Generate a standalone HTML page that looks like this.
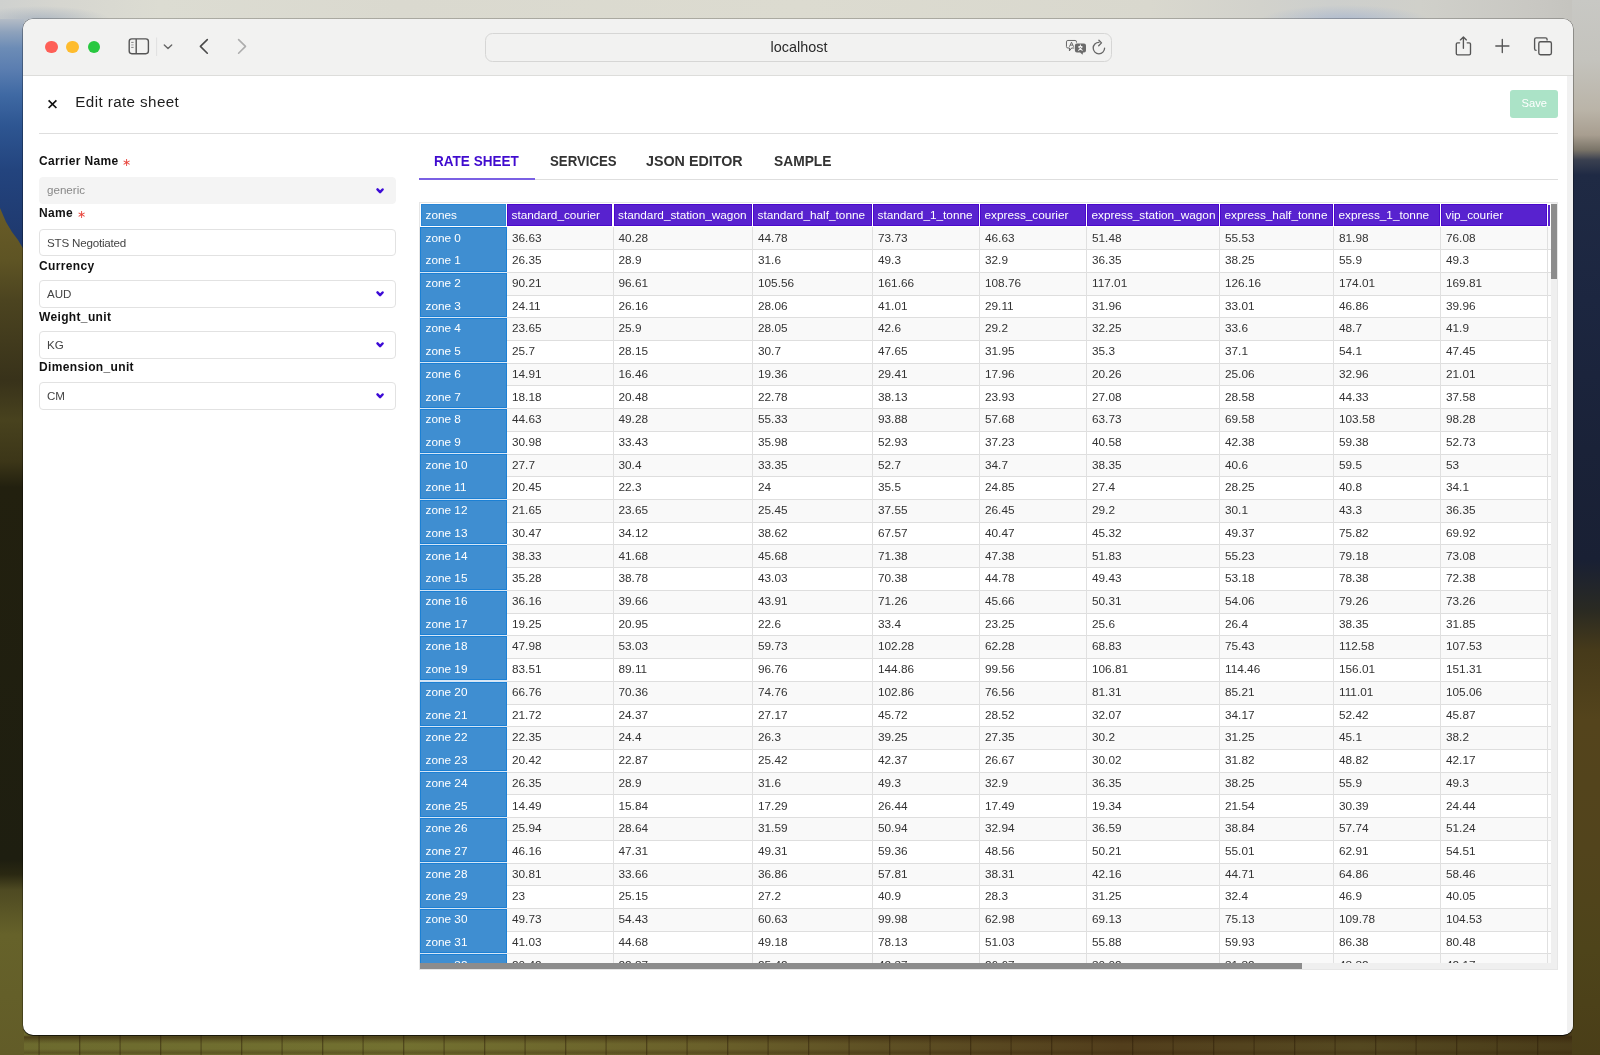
<!DOCTYPE html>
<html><head><meta charset="utf-8"><title>Edit rate sheet</title>
<style>
html,body{margin:0;padding:0}
body{width:1600px;height:1055px;overflow:hidden;position:relative;font-family:"Liberation Sans", sans-serif;background:#6a6a30}
.t{position:absolute;white-space:nowrap}
.bg{position:absolute}
</style></head><body>
<div id="root" style="position:absolute;left:0;top:0;width:1600px;height:1055px;will-change:transform">
<div class="bg" style="left:0;top:0;width:1600px;height:32px;background:radial-gradient(ellipse 85px 16px at 1345px 21px,rgba(168,182,206,0.85),rgba(168,182,206,0) 100%),radial-gradient(ellipse 70px 14px at 40px 20px,rgba(150,165,185,0.6),rgba(150,165,185,0) 100%),linear-gradient(90deg,#cfd1cf 0px,#d6d6d0 60px,#dcdcd2 160px,#dad9cf 400px,#dcdbd0 800px,#d9d8ce 1150px,#d2d2cc 1260px,#cdcfcd 1330px,#d0d0ca 1420px,#c8c7c2 1540px,#c2c1bc 1600px)"></div>
<div class="bg" style="left:0;top:1022px;width:1600px;height:33px;background:repeating-linear-gradient(90deg,rgba(40,25,5,0) 0px,rgba(40,25,5,0) 38px,rgba(40,25,5,0.45) 39px,rgba(40,25,5,0) 40.5px),linear-gradient(180deg,rgba(40,25,5,0) 0px,rgba(40,25,5,0) 13px,rgba(50,30,8,0.55) 15px,rgba(50,30,8,0.2) 19px,rgba(40,25,5,0) 22px,rgba(40,25,5,0) 27px,rgba(50,30,8,0.3) 31px,rgba(40,25,5,0) 33px),linear-gradient(90deg,#6c6a2e 0%,#727030 25%,#6a602a 44%,#5e5024 55%,#523e1c 70%,#544820 85%,#483a18 100%)"></div>
<div class="bg" style="left:0;top:19px;width:23.5px;height:1036px;background:linear-gradient(180deg,#b4bcc6 0px,#8ea2bc 13px,#6c8cb6 29px,#5a7db0 51px,#3f69a3 76px,#2e5692 106px,#23447e 151px,#1f3a70 211px,#1e3668 241px)"></div>
<svg class="bg" style="left:0;top:195px" width="24" height="860" viewBox="0 195 24 860">
<defs><linearGradient id="tree" x1="0" y1="195" x2="0" y2="1055" gradientUnits="userSpaceOnUse">
<stop offset="0" stop-color="#6c5e28"/><stop offset="0.076" stop-color="#5e5424"/><stop offset="0.122" stop-color="#4c4420"/><stop offset="0.215" stop-color="#38321a"/><stop offset="0.262" stop-color="#48421e"/><stop offset="0.31" stop-color="#3c3618"/><stop offset="0.34" stop-color="#22200f"/><stop offset="0.773" stop-color="#1e1e10"/><stop offset="0.79" stop-color="#2a2812"/><stop offset="0.808" stop-color="#4e4a22"/><stop offset="0.86" stop-color="#66622a"/><stop offset="1" stop-color="#625c28"/></linearGradient></defs>
<path d="M0 208 L6 222 L12 232 L18 240 L24 250 L24 1055 L0 1055 Z" fill="url(#tree)"/>
</svg>
<div class="bg" style="left:1572px;top:0;width:28px;height:1055px;background:linear-gradient(180deg,#c8c8c4 0px,#c4c3bd 60px,#bab4a8 110px,#a89e90 135px,#7a7468 150px,#3a4050 160px,#1f2a44 175px,#1c2640 300px,#1a2238 450px,#192034 560px,#2a2a22 610px,#463a1a 650px,#54441c 720px,#52441c 850px,#4e441a 950px,#4a3e18 1055px)"></div>
<div style="position:absolute;left:23px;top:18.5px;width:1550px;height:1016.5px;border-radius:10px;background:#fff;overflow:hidden;box-shadow:0 0 0 0.5px rgba(0,0,0,0.45),0 1px 1px rgba(0,0,0,0.75)"><div style="position:absolute;left:0;top:0;width:1550px;height:56.5px;background:#f2f2f1;border-bottom:1px solid #dddddb"></div><div style="position:absolute;left:1544px;top:57.5px;width:6px;height:960px;background:#f1f1f1"></div></div><div style="position:absolute;left:45.0px;top:40.6px;width:12.6px;height:12.6px;border-radius:50%;background:#fe5f57"></div><div style="position:absolute;left:66.2px;top:40.6px;width:12.6px;height:12.6px;border-radius:50%;background:#febc2e"></div><div style="position:absolute;left:87.7px;top:40.6px;width:12.6px;height:12.6px;border-radius:50%;background:#28c840"></div><svg style="position:absolute;left:120px;top:30px" width="140" height="35" viewBox="120 30 140 35">
<rect x="129.2" y="38.9" width="19.2" height="14.8" rx="2.6" fill="none" stroke="#555" stroke-width="1.4"/>
<line x1="136.2" y1="38.9" x2="136.2" y2="53.7" stroke="#555" stroke-width="1.4"/>
<line x1="131.2" y1="42.4" x2="133.6" y2="42.4" stroke="#777" stroke-width="0.9"/>
<line x1="131.2" y1="44.9" x2="133.6" y2="44.9" stroke="#999" stroke-width="0.9"/>
<line x1="131.2" y1="47.4" x2="133.6" y2="47.4" stroke="#777" stroke-width="0.9"/>
<line x1="156.6" y1="37.5" x2="156.6" y2="56" stroke="#e0e0e0" stroke-width="1"/>
<path d="M164.3 45 L168 48.5 L171.7 45" fill="none" stroke="#666" stroke-width="1.4" stroke-linecap="round" stroke-linejoin="round"/>
<path d="M207.3 39.6 L200.4 46.4 L207.3 53.2" fill="none" stroke="#4a4a4a" stroke-width="1.6" stroke-linecap="round" stroke-linejoin="round"/>
<path d="M238.6 39.6 L245.5 46.4 L238.6 53.2" fill="none" stroke="#adadad" stroke-width="1.6" stroke-linecap="round" stroke-linejoin="round"/>
</svg><div style="position:absolute;left:484.8px;top:32.5px;width:627px;height:29px;box-sizing:border-box;border:1px solid #d6d6d5;border-radius:7.5px;background:#f2f2f1"></div><div class="t" style="left:770.60px;top:40.11px;font-size:14.4px;line-height:14.4px;color:#2a2a2a;font-weight:400;">localhost</div>
<svg style="position:absolute;left:1060px;top:35px" width="55" height="25" viewBox="1060 35 55 25">
<path d="M1067.9 40.46 H1075.1 A1.4 1.4 0 0 1 1076.5 41.86 V46.6 A1.4 1.4 0 0 1 1075.1 48 H1071.6 L1069.4 50.9 L1069.5 48 H1067.9 A1.4 1.4 0 0 1 1066.46 46.6 V41.86 A1.4 1.4 0 0 1 1067.9 40.46 Z" fill="none" stroke="#666" stroke-width="1"/>
<path d="M1069.4 46.7 L1071.5 42.2 L1073.6 46.7 M1070.2 45.1 H1072.8" fill="none" stroke="#666" stroke-width="0.95"/>
<path d="M1076.6 42.6 H1084.3 A2.4 2.4 0 0 1 1086.7 45 V51 A2.4 2.4 0 0 1 1084.3 53.4 H1083.8 L1083.4 55.6 L1079.9 53.4 H1076.6 A2.4 2.4 0 0 1 1074.2 51 V45 A2.4 2.4 0 0 1 1076.6 42.6 Z" fill="#f2f2f1"/>
<path d="M1076.9 43.5 H1084 A2 2 0 0 1 1086 45.5 V50.5 A2 2 0 0 1 1084 52.5 H1083 L1082.6 54.75 L1080.1 52.5 H1076.9 A2 2 0 0 1 1074.9 50.5 V45.5 A2 2 0 0 1 1076.9 43.5 Z" fill="#6b6b6b"/>
<path d="M1078.3 46.6 L1082.5 50.6 M1082.5 46.6 L1078.3 50.6 M1078.4 46.5 H1082.4 M1080.4 44.6 V46.2" fill="none" stroke="#f4f4f4" stroke-width="1.05"/>
<path d="M1104.6 48.1 A5.7 5.7 0 1 1 1098.9 42.4" fill="none" stroke="#666" stroke-width="1.3" stroke-linecap="round"/>
<path d="M1098.9 40.2 L1101.5 42.9 L1098.7 45.8" fill="none" stroke="#666" stroke-width="1.3" stroke-linecap="round" stroke-linejoin="round"/>
</svg><svg style="position:absolute;left:1440px;top:30px" width="130" height="35" viewBox="1440 30 130 35">
<path d="M1459.6 42.8 h-2 a1.3 1.3 0 0 0 -1.3 1.3 v9.4 a1.3 1.3 0 0 0 1.3 1.3 h11.6 a1.3 1.3 0 0 0 1.3 -1.3 v-9.4 a1.3 1.3 0 0 0 -1.3 -1.3 h-2" fill="none" stroke="#555" stroke-width="1.35" stroke-linecap="round"/>
<path d="M1463.4 48.2 V37 M1460.4 39.9 L1463.4 36.9 L1466.4 39.9" fill="none" stroke="#555" stroke-width="1.35" stroke-linecap="round" stroke-linejoin="round"/>
<path d="M1495.8 46 H1508.9 M1502.3 39.4 V52.6" fill="none" stroke="#555" stroke-width="1.35" stroke-linecap="round"/>
<path d="M1536.6 50.3 h-0.4 a1.6 1.6 0 0 1 -1.6 -1.6 v-9.2 a1.6 1.6 0 0 1 1.6 -1.6 h9.3 a1.6 1.6 0 0 1 1.6 1.6 v0.9" fill="none" stroke="#555" stroke-width="1.35"/>
<rect x="1538.8" y="41.7" width="12.6" height="13" rx="1.7" fill="none" stroke="#555" stroke-width="1.35"/>
</svg><svg style="position:absolute;left:45px;top:97px" width="15" height="15" viewBox="45 97 15 15">
<path d="M48.6 100.4 L56.4 108 M56.4 100.4 L48.6 108" stroke="#111" stroke-width="1.7" stroke-linecap="butt"/></svg><div class="t" style="left:75.30px;top:94.23px;font-size:15.2px;line-height:15.2px;color:#1e1e1e;font-weight:400;letter-spacing:0.4px">Edit rate sheet</div>
<div style="position:absolute;left:1510px;top:90px;width:48px;height:28px;border-radius:3px;background:#abe3c7"></div><div class="t" style="left:1521.50px;top:98.42px;font-size:11.2px;line-height:11.2px;color:#ffffff;font-weight:400;">Save</div>
<div style="position:absolute;left:39px;top:132.8px;width:1519px;height:1px;background:#dedede"></div><div class="t" style="left:39.00px;top:155.44px;font-size:12px;line-height:12px;color:#111;font-weight:700;letter-spacing:0.35px">Carrier Name</div>
<div class="t" style="left:121.90px;top:157.29px;font-size:11px;line-height:11px;color:#e8453c;font-weight:400;">&#x2217;</div>
<div style="position:absolute;left:38.8px;top:176.8px;width:357px;height:27.5px;box-sizing:border-box;background:#f4f4f4;border:1px solid #f4f4f4;border-radius:4px"></div><div class="t" style="left:47.00px;top:183.98px;font-size:11.6px;line-height:11.6px;color:#888;font-weight:400;">generic</div>
<div class="t" style="left:39.00px;top:207.34px;font-size:12px;line-height:12px;color:#111;font-weight:700;letter-spacing:0.35px">Name</div>
<div class="t" style="left:77.20px;top:209.19px;font-size:11px;line-height:11px;color:#e8453c;font-weight:400;">&#x2217;</div>
<div style="position:absolute;left:38.8px;top:228.6px;width:357px;height:27.5px;box-sizing:border-box;background:#fff;border:1px solid #e2e2e2;border-radius:4px"></div><div class="t" style="left:47.00px;top:236.88px;font-size:11.6px;line-height:11.6px;color:#444;font-weight:400;letter-spacing:-0.2px">STS Negotiated</div>
<div class="t" style="left:39.00px;top:260.34px;font-size:12px;line-height:12px;color:#111;font-weight:700;letter-spacing:0.35px">Currency</div>
<div style="position:absolute;left:38.8px;top:280.2px;width:357px;height:27.5px;box-sizing:border-box;background:#fff;border:1px solid #e2e2e2;border-radius:4px"></div><div class="t" style="left:47.00px;top:287.78px;font-size:11.6px;line-height:11.6px;color:#444;font-weight:400;">AUD</div>
<div class="t" style="left:39.00px;top:310.94px;font-size:12px;line-height:12px;color:#111;font-weight:700;letter-spacing:0.35px">Weight_unit</div>
<div style="position:absolute;left:38.8px;top:331.3px;width:357px;height:27.5px;box-sizing:border-box;background:#fff;border:1px solid #e2e2e2;border-radius:4px"></div><div class="t" style="left:47.00px;top:338.98px;font-size:11.6px;line-height:11.6px;color:#444;font-weight:400;">KG</div>
<div class="t" style="left:39.00px;top:361.44px;font-size:12px;line-height:12px;color:#111;font-weight:700;letter-spacing:0.35px">Dimension_unit</div>
<div style="position:absolute;left:38.8px;top:382.1px;width:357px;height:27.5px;box-sizing:border-box;background:#fff;border:1px solid #e2e2e2;border-radius:4px"></div><div class="t" style="left:47.00px;top:389.88px;font-size:11.6px;line-height:11.6px;color:#444;font-weight:400;">CM</div>
<svg style="position:absolute;left:372px;top:182.60px" width="16" height="16" viewBox="372 182.60 16 16"><path d="M377.5 189.00 L380.1 191.70 L382.6 189.10" fill="none" stroke="#3d0bd6" stroke-width="2.5" stroke-linecap="round" stroke-linejoin="round"/></svg><svg style="position:absolute;left:372px;top:285.80px" width="16" height="16" viewBox="372 285.80 16 16"><path d="M377.5 292.20 L380.1 294.90 L382.6 292.30" fill="none" stroke="#3d0bd6" stroke-width="2.5" stroke-linecap="round" stroke-linejoin="round"/></svg><svg style="position:absolute;left:372px;top:336.90px" width="16" height="16" viewBox="372 336.90 16 16"><path d="M377.5 343.30 L380.1 346.00 L382.6 343.40" fill="none" stroke="#3d0bd6" stroke-width="2.5" stroke-linecap="round" stroke-linejoin="round"/></svg><svg style="position:absolute;left:372px;top:387.60px" width="16" height="16" viewBox="372 387.60 16 16"><path d="M377.5 394.00 L380.1 396.70 L382.6 394.10" fill="none" stroke="#3d0bd6" stroke-width="2.5" stroke-linecap="round" stroke-linejoin="round"/></svg><div class="t" style="left:434.40px;top:152.88px;font-size:15.5px;line-height:15.5px;color:#400bcf;font-weight:700;transform-origin:0 0;transform:scaleX(0.8742)">RATE SHEET</div><div class="t" style="left:549.70px;top:152.88px;font-size:15.5px;line-height:15.5px;color:#333;font-weight:700;transform-origin:0 0;transform:scaleX(0.8528)">SERVICES</div><div class="t" style="left:646.10px;top:152.88px;font-size:15.5px;line-height:15.5px;color:#333;font-weight:700;transform-origin:0 0;transform:scaleX(0.9227)">JSON EDITOR</div><div class="t" style="left:773.70px;top:152.88px;font-size:15.5px;line-height:15.5px;color:#333;font-weight:700;transform-origin:0 0;transform:scaleX(0.8901)">SAMPLE</div><div style="position:absolute;left:419px;top:178.6px;width:1139px;height:1px;background:#dedede"></div><div style="position:absolute;left:419px;top:178.4px;width:115.5px;height:1.6px;background:#7a60e3"></div><div style="position:absolute;left:419px;top:202px;width:1139px;height:768px;border:1px solid #e6e6e6;box-sizing:border-box;background:#fff"></div><div style="position:absolute;left:420px;top:203px;width:1131px;height:760px;overflow:hidden"><div style="position:absolute;left:86.0px;top:23.90px;width:1045px;height:22.72px;background:#f9f9f9"></div><div style="position:absolute;left:86.0px;top:46.62px;width:1045px;height:22.72px;background:#ffffff"></div><div style="position:absolute;left:86.0px;top:46.12px;width:1045px;height:1px;background:#dedede"></div><div style="position:absolute;left:86.0px;top:69.34px;width:1045px;height:22.72px;background:#f9f9f9"></div><div style="position:absolute;left:86.0px;top:68.84px;width:1045px;height:1px;background:#dedede"></div><div style="position:absolute;left:86.0px;top:92.06px;width:1045px;height:22.72px;background:#ffffff"></div><div style="position:absolute;left:86.0px;top:91.56px;width:1045px;height:1px;background:#dedede"></div><div style="position:absolute;left:86.0px;top:114.78px;width:1045px;height:22.72px;background:#f9f9f9"></div><div style="position:absolute;left:86.0px;top:114.28px;width:1045px;height:1px;background:#dedede"></div><div style="position:absolute;left:86.0px;top:137.50px;width:1045px;height:22.72px;background:#ffffff"></div><div style="position:absolute;left:86.0px;top:137.00px;width:1045px;height:1px;background:#dedede"></div><div style="position:absolute;left:86.0px;top:160.22px;width:1045px;height:22.72px;background:#f9f9f9"></div><div style="position:absolute;left:86.0px;top:159.72px;width:1045px;height:1px;background:#dedede"></div><div style="position:absolute;left:86.0px;top:182.94px;width:1045px;height:22.72px;background:#ffffff"></div><div style="position:absolute;left:86.0px;top:182.44px;width:1045px;height:1px;background:#dedede"></div><div style="position:absolute;left:86.0px;top:205.66px;width:1045px;height:22.72px;background:#f9f9f9"></div><div style="position:absolute;left:86.0px;top:205.16px;width:1045px;height:1px;background:#dedede"></div><div style="position:absolute;left:86.0px;top:228.38px;width:1045px;height:22.72px;background:#ffffff"></div><div style="position:absolute;left:86.0px;top:227.88px;width:1045px;height:1px;background:#dedede"></div><div style="position:absolute;left:86.0px;top:251.10px;width:1045px;height:22.72px;background:#f9f9f9"></div><div style="position:absolute;left:86.0px;top:250.60px;width:1045px;height:1px;background:#dedede"></div><div style="position:absolute;left:86.0px;top:273.82px;width:1045px;height:22.72px;background:#ffffff"></div><div style="position:absolute;left:86.0px;top:273.32px;width:1045px;height:1px;background:#dedede"></div><div style="position:absolute;left:86.0px;top:296.54px;width:1045px;height:22.72px;background:#f9f9f9"></div><div style="position:absolute;left:86.0px;top:296.04px;width:1045px;height:1px;background:#dedede"></div><div style="position:absolute;left:86.0px;top:319.26px;width:1045px;height:22.72px;background:#ffffff"></div><div style="position:absolute;left:86.0px;top:318.76px;width:1045px;height:1px;background:#dedede"></div><div style="position:absolute;left:86.0px;top:341.98px;width:1045px;height:22.72px;background:#f9f9f9"></div><div style="position:absolute;left:86.0px;top:341.48px;width:1045px;height:1px;background:#dedede"></div><div style="position:absolute;left:86.0px;top:364.70px;width:1045px;height:22.72px;background:#ffffff"></div><div style="position:absolute;left:86.0px;top:364.20px;width:1045px;height:1px;background:#dedede"></div><div style="position:absolute;left:86.0px;top:387.42px;width:1045px;height:22.72px;background:#f9f9f9"></div><div style="position:absolute;left:86.0px;top:386.92px;width:1045px;height:1px;background:#dedede"></div><div style="position:absolute;left:86.0px;top:410.14px;width:1045px;height:22.72px;background:#ffffff"></div><div style="position:absolute;left:86.0px;top:409.64px;width:1045px;height:1px;background:#dedede"></div><div style="position:absolute;left:86.0px;top:432.86px;width:1045px;height:22.72px;background:#f9f9f9"></div><div style="position:absolute;left:86.0px;top:432.36px;width:1045px;height:1px;background:#dedede"></div><div style="position:absolute;left:86.0px;top:455.58px;width:1045px;height:22.72px;background:#ffffff"></div><div style="position:absolute;left:86.0px;top:455.08px;width:1045px;height:1px;background:#dedede"></div><div style="position:absolute;left:86.0px;top:478.30px;width:1045px;height:22.72px;background:#f9f9f9"></div><div style="position:absolute;left:86.0px;top:477.80px;width:1045px;height:1px;background:#dedede"></div><div style="position:absolute;left:86.0px;top:501.02px;width:1045px;height:22.72px;background:#ffffff"></div><div style="position:absolute;left:86.0px;top:500.52px;width:1045px;height:1px;background:#dedede"></div><div style="position:absolute;left:86.0px;top:523.74px;width:1045px;height:22.72px;background:#f9f9f9"></div><div style="position:absolute;left:86.0px;top:523.24px;width:1045px;height:1px;background:#dedede"></div><div style="position:absolute;left:86.0px;top:546.46px;width:1045px;height:22.72px;background:#ffffff"></div><div style="position:absolute;left:86.0px;top:545.96px;width:1045px;height:1px;background:#dedede"></div><div style="position:absolute;left:86.0px;top:569.18px;width:1045px;height:22.72px;background:#f9f9f9"></div><div style="position:absolute;left:86.0px;top:568.68px;width:1045px;height:1px;background:#dedede"></div><div style="position:absolute;left:86.0px;top:591.90px;width:1045px;height:22.72px;background:#ffffff"></div><div style="position:absolute;left:86.0px;top:591.40px;width:1045px;height:1px;background:#dedede"></div><div style="position:absolute;left:86.0px;top:614.62px;width:1045px;height:22.72px;background:#f9f9f9"></div><div style="position:absolute;left:86.0px;top:614.12px;width:1045px;height:1px;background:#dedede"></div><div style="position:absolute;left:86.0px;top:637.34px;width:1045px;height:22.72px;background:#ffffff"></div><div style="position:absolute;left:86.0px;top:636.84px;width:1045px;height:1px;background:#dedede"></div><div style="position:absolute;left:86.0px;top:660.06px;width:1045px;height:22.72px;background:#f9f9f9"></div><div style="position:absolute;left:86.0px;top:659.56px;width:1045px;height:1px;background:#dedede"></div><div style="position:absolute;left:86.0px;top:682.78px;width:1045px;height:22.72px;background:#ffffff"></div><div style="position:absolute;left:86.0px;top:682.28px;width:1045px;height:1px;background:#dedede"></div><div style="position:absolute;left:86.0px;top:705.50px;width:1045px;height:22.72px;background:#f9f9f9"></div><div style="position:absolute;left:86.0px;top:705.00px;width:1045px;height:1px;background:#dedede"></div><div style="position:absolute;left:86.0px;top:728.22px;width:1045px;height:22.72px;background:#ffffff"></div><div style="position:absolute;left:86.0px;top:727.72px;width:1045px;height:1px;background:#dedede"></div><div style="position:absolute;left:86.0px;top:750.94px;width:1045px;height:22.72px;background:#f9f9f9"></div><div style="position:absolute;left:86.0px;top:750.44px;width:1045px;height:1px;background:#dedede"></div><div style="position:absolute;left:86.0px;top:23.9px;width:1px;height:800px;background:#e0e0e0"></div><div style="position:absolute;left:192.5px;top:23.9px;width:1px;height:800px;background:#e0e0e0"></div><div style="position:absolute;left:332.0px;top:23.9px;width:1px;height:800px;background:#e0e0e0"></div><div style="position:absolute;left:452.0px;top:23.9px;width:1px;height:800px;background:#e0e0e0"></div><div style="position:absolute;left:559.0px;top:23.9px;width:1px;height:800px;background:#e0e0e0"></div><div style="position:absolute;left:666.0px;top:23.9px;width:1px;height:800px;background:#e0e0e0"></div><div style="position:absolute;left:799.0px;top:23.9px;width:1px;height:800px;background:#e0e0e0"></div><div style="position:absolute;left:913.0px;top:23.9px;width:1px;height:800px;background:#e0e0e0"></div><div style="position:absolute;left:1020.0px;top:23.9px;width:1px;height:800px;background:#e0e0e0"></div><div style="position:absolute;left:1127.0px;top:23.9px;width:1px;height:800px;background:#e0e0e0"></div><div style="position:absolute;left:0px;top:23.90px;width:86.5px;height:800px;background:#d6e6f6"></div><div style="position:absolute;left:0px;top:24.10px;width:86.5px;height:44.44px;background:#3f8ed1;box-shadow:inset 0 0 0 1px #1c80d4"></div><div style="position:absolute;left:0px;top:69.54px;width:86.5px;height:44.44px;background:#3f8ed1;box-shadow:inset 0 0 0 1px #1c80d4"></div><div style="position:absolute;left:0px;top:114.98px;width:86.5px;height:44.44px;background:#3f8ed1;box-shadow:inset 0 0 0 1px #1c80d4"></div><div style="position:absolute;left:0px;top:160.42px;width:86.5px;height:44.44px;background:#3f8ed1;box-shadow:inset 0 0 0 1px #1c80d4"></div><div style="position:absolute;left:0px;top:205.86px;width:86.5px;height:44.44px;background:#3f8ed1;box-shadow:inset 0 0 0 1px #1c80d4"></div><div style="position:absolute;left:0px;top:251.30px;width:86.5px;height:44.44px;background:#3f8ed1;box-shadow:inset 0 0 0 1px #1c80d4"></div><div style="position:absolute;left:0px;top:296.74px;width:86.5px;height:44.44px;background:#3f8ed1;box-shadow:inset 0 0 0 1px #1c80d4"></div><div style="position:absolute;left:0px;top:342.18px;width:86.5px;height:44.44px;background:#3f8ed1;box-shadow:inset 0 0 0 1px #1c80d4"></div><div style="position:absolute;left:0px;top:387.62px;width:86.5px;height:44.44px;background:#3f8ed1;box-shadow:inset 0 0 0 1px #1c80d4"></div><div style="position:absolute;left:0px;top:433.06px;width:86.5px;height:44.44px;background:#3f8ed1;box-shadow:inset 0 0 0 1px #1c80d4"></div><div style="position:absolute;left:0px;top:478.50px;width:86.5px;height:44.44px;background:#3f8ed1;box-shadow:inset 0 0 0 1px #1c80d4"></div><div style="position:absolute;left:0px;top:523.94px;width:86.5px;height:44.44px;background:#3f8ed1;box-shadow:inset 0 0 0 1px #1c80d4"></div><div style="position:absolute;left:0px;top:569.38px;width:86.5px;height:44.44px;background:#3f8ed1;box-shadow:inset 0 0 0 1px #1c80d4"></div><div style="position:absolute;left:0px;top:614.82px;width:86.5px;height:44.44px;background:#3f8ed1;box-shadow:inset 0 0 0 1px #1c80d4"></div><div style="position:absolute;left:0px;top:660.26px;width:86.5px;height:44.44px;background:#3f8ed1;box-shadow:inset 0 0 0 1px #1c80d4"></div><div style="position:absolute;left:0px;top:705.70px;width:86.5px;height:44.44px;background:#3f8ed1;box-shadow:inset 0 0 0 1px #1c80d4"></div><div style="position:absolute;left:0px;top:751.14px;width:86.5px;height:44.44px;background:#3f8ed1;box-shadow:inset 0 0 0 1px #1c80d4"></div><div style="position:absolute;left:1.0px;top:1.4px;width:84.5px;height:21.3px;background:#3f8ed1;box-shadow:inset 0 0 0 1px #2a86d6"></div><div style="position:absolute;left:87.0px;top:1.4px;width:105.0px;height:21.3px;background:#5822cf;box-shadow:inset 0 0 0 1px #4a08cc"></div><div style="position:absolute;left:193.5px;top:1.4px;width:138.0px;height:21.3px;background:#5822cf;box-shadow:inset 0 0 0 1px #4a08cc"></div><div style="position:absolute;left:333.0px;top:1.4px;width:118.5px;height:21.3px;background:#5822cf;box-shadow:inset 0 0 0 1px #4a08cc"></div><div style="position:absolute;left:453.0px;top:1.4px;width:105.5px;height:21.3px;background:#5822cf;box-shadow:inset 0 0 0 1px #4a08cc"></div><div style="position:absolute;left:560.0px;top:1.4px;width:105.5px;height:21.3px;background:#5822cf;box-shadow:inset 0 0 0 1px #4a08cc"></div><div style="position:absolute;left:667.0px;top:1.4px;width:131.5px;height:21.3px;background:#5822cf;box-shadow:inset 0 0 0 1px #4a08cc"></div><div style="position:absolute;left:800.0px;top:1.4px;width:112.5px;height:21.3px;background:#5822cf;box-shadow:inset 0 0 0 1px #4a08cc"></div><div style="position:absolute;left:914.0px;top:1.4px;width:105.5px;height:21.3px;background:#5822cf;box-shadow:inset 0 0 0 1px #4a08cc"></div><div style="position:absolute;left:1021.0px;top:1.4px;width:105.5px;height:21.3px;background:#5822cf;box-shadow:inset 0 0 0 1px #4a08cc"></div><div style="position:absolute;left:1128.3px;top:1.8px;width:2.2px;height:20.8px;background:#5822cf"></div><div class="t" style="left:5.50px;top:6.51px;font-size:11.8px;line-height:11.8px;color:#fff;font-weight:400;">zones</div>
<div class="t" style="left:91.50px;top:6.51px;font-size:11.8px;line-height:11.8px;color:#fff;font-weight:400;">standard_courier</div>
<div class="t" style="left:198.00px;top:6.51px;font-size:11.8px;line-height:11.8px;color:#fff;font-weight:400;">standard_station_wagon</div>
<div class="t" style="left:337.50px;top:6.51px;font-size:11.8px;line-height:11.8px;color:#fff;font-weight:400;">standard_half_tonne</div>
<div class="t" style="left:457.50px;top:6.51px;font-size:11.8px;line-height:11.8px;color:#fff;font-weight:400;">standard_1_tonne</div>
<div class="t" style="left:564.50px;top:6.51px;font-size:11.8px;line-height:11.8px;color:#fff;font-weight:400;">express_courier</div>
<div class="t" style="left:671.50px;top:6.51px;font-size:11.8px;line-height:11.8px;color:#fff;font-weight:400;">express_station_wagon</div>
<div class="t" style="left:804.50px;top:6.51px;font-size:11.8px;line-height:11.8px;color:#fff;font-weight:400;">express_half_tonne</div>
<div class="t" style="left:918.50px;top:6.51px;font-size:11.8px;line-height:11.8px;color:#fff;font-weight:400;">express_1_tonne</div>
<div class="t" style="left:1025.50px;top:6.51px;font-size:11.8px;line-height:11.8px;color:#fff;font-weight:400;">vip_courier</div>
<div class="t" style="left:5.50px;top:29.51px;font-size:11.8px;line-height:11.8px;color:#fff;font-weight:400;">zone 0</div>
<div class="t" style="left:92.00px;top:29.51px;font-size:11.8px;line-height:11.8px;color:#333;font-weight:400;">36.63</div>
<div class="t" style="left:198.50px;top:29.51px;font-size:11.8px;line-height:11.8px;color:#333;font-weight:400;">40.28</div>
<div class="t" style="left:338.00px;top:29.51px;font-size:11.8px;line-height:11.8px;color:#333;font-weight:400;">44.78</div>
<div class="t" style="left:458.00px;top:29.51px;font-size:11.8px;line-height:11.8px;color:#333;font-weight:400;">73.73</div>
<div class="t" style="left:565.00px;top:29.51px;font-size:11.8px;line-height:11.8px;color:#333;font-weight:400;">46.63</div>
<div class="t" style="left:672.00px;top:29.51px;font-size:11.8px;line-height:11.8px;color:#333;font-weight:400;">51.48</div>
<div class="t" style="left:805.00px;top:29.51px;font-size:11.8px;line-height:11.8px;color:#333;font-weight:400;">55.53</div>
<div class="t" style="left:919.00px;top:29.51px;font-size:11.8px;line-height:11.8px;color:#333;font-weight:400;">81.98</div>
<div class="t" style="left:1026.00px;top:29.51px;font-size:11.8px;line-height:11.8px;color:#333;font-weight:400;">76.08</div>
<div class="t" style="left:5.50px;top:52.23px;font-size:11.8px;line-height:11.8px;color:#fff;font-weight:400;">zone 1</div>
<div class="t" style="left:92.00px;top:52.23px;font-size:11.8px;line-height:11.8px;color:#333;font-weight:400;">26.35</div>
<div class="t" style="left:198.50px;top:52.23px;font-size:11.8px;line-height:11.8px;color:#333;font-weight:400;">28.9</div>
<div class="t" style="left:338.00px;top:52.23px;font-size:11.8px;line-height:11.8px;color:#333;font-weight:400;">31.6</div>
<div class="t" style="left:458.00px;top:52.23px;font-size:11.8px;line-height:11.8px;color:#333;font-weight:400;">49.3</div>
<div class="t" style="left:565.00px;top:52.23px;font-size:11.8px;line-height:11.8px;color:#333;font-weight:400;">32.9</div>
<div class="t" style="left:672.00px;top:52.23px;font-size:11.8px;line-height:11.8px;color:#333;font-weight:400;">36.35</div>
<div class="t" style="left:805.00px;top:52.23px;font-size:11.8px;line-height:11.8px;color:#333;font-weight:400;">38.25</div>
<div class="t" style="left:919.00px;top:52.23px;font-size:11.8px;line-height:11.8px;color:#333;font-weight:400;">55.9</div>
<div class="t" style="left:1026.00px;top:52.23px;font-size:11.8px;line-height:11.8px;color:#333;font-weight:400;">49.3</div>
<div class="t" style="left:5.50px;top:74.95px;font-size:11.8px;line-height:11.8px;color:#fff;font-weight:400;">zone 2</div>
<div class="t" style="left:92.00px;top:74.95px;font-size:11.8px;line-height:11.8px;color:#333;font-weight:400;">90.21</div>
<div class="t" style="left:198.50px;top:74.95px;font-size:11.8px;line-height:11.8px;color:#333;font-weight:400;">96.61</div>
<div class="t" style="left:338.00px;top:74.95px;font-size:11.8px;line-height:11.8px;color:#333;font-weight:400;">105.56</div>
<div class="t" style="left:458.00px;top:74.95px;font-size:11.8px;line-height:11.8px;color:#333;font-weight:400;">161.66</div>
<div class="t" style="left:565.00px;top:74.95px;font-size:11.8px;line-height:11.8px;color:#333;font-weight:400;">108.76</div>
<div class="t" style="left:672.00px;top:74.95px;font-size:11.8px;line-height:11.8px;color:#333;font-weight:400;">117.01</div>
<div class="t" style="left:805.00px;top:74.95px;font-size:11.8px;line-height:11.8px;color:#333;font-weight:400;">126.16</div>
<div class="t" style="left:919.00px;top:74.95px;font-size:11.8px;line-height:11.8px;color:#333;font-weight:400;">174.01</div>
<div class="t" style="left:1026.00px;top:74.95px;font-size:11.8px;line-height:11.8px;color:#333;font-weight:400;">169.81</div>
<div class="t" style="left:5.50px;top:97.67px;font-size:11.8px;line-height:11.8px;color:#fff;font-weight:400;">zone 3</div>
<div class="t" style="left:92.00px;top:97.67px;font-size:11.8px;line-height:11.8px;color:#333;font-weight:400;">24.11</div>
<div class="t" style="left:198.50px;top:97.67px;font-size:11.8px;line-height:11.8px;color:#333;font-weight:400;">26.16</div>
<div class="t" style="left:338.00px;top:97.67px;font-size:11.8px;line-height:11.8px;color:#333;font-weight:400;">28.06</div>
<div class="t" style="left:458.00px;top:97.67px;font-size:11.8px;line-height:11.8px;color:#333;font-weight:400;">41.01</div>
<div class="t" style="left:565.00px;top:97.67px;font-size:11.8px;line-height:11.8px;color:#333;font-weight:400;">29.11</div>
<div class="t" style="left:672.00px;top:97.67px;font-size:11.8px;line-height:11.8px;color:#333;font-weight:400;">31.96</div>
<div class="t" style="left:805.00px;top:97.67px;font-size:11.8px;line-height:11.8px;color:#333;font-weight:400;">33.01</div>
<div class="t" style="left:919.00px;top:97.67px;font-size:11.8px;line-height:11.8px;color:#333;font-weight:400;">46.86</div>
<div class="t" style="left:1026.00px;top:97.67px;font-size:11.8px;line-height:11.8px;color:#333;font-weight:400;">39.96</div>
<div class="t" style="left:5.50px;top:120.39px;font-size:11.8px;line-height:11.8px;color:#fff;font-weight:400;">zone 4</div>
<div class="t" style="left:92.00px;top:120.39px;font-size:11.8px;line-height:11.8px;color:#333;font-weight:400;">23.65</div>
<div class="t" style="left:198.50px;top:120.39px;font-size:11.8px;line-height:11.8px;color:#333;font-weight:400;">25.9</div>
<div class="t" style="left:338.00px;top:120.39px;font-size:11.8px;line-height:11.8px;color:#333;font-weight:400;">28.05</div>
<div class="t" style="left:458.00px;top:120.39px;font-size:11.8px;line-height:11.8px;color:#333;font-weight:400;">42.6</div>
<div class="t" style="left:565.00px;top:120.39px;font-size:11.8px;line-height:11.8px;color:#333;font-weight:400;">29.2</div>
<div class="t" style="left:672.00px;top:120.39px;font-size:11.8px;line-height:11.8px;color:#333;font-weight:400;">32.25</div>
<div class="t" style="left:805.00px;top:120.39px;font-size:11.8px;line-height:11.8px;color:#333;font-weight:400;">33.6</div>
<div class="t" style="left:919.00px;top:120.39px;font-size:11.8px;line-height:11.8px;color:#333;font-weight:400;">48.7</div>
<div class="t" style="left:1026.00px;top:120.39px;font-size:11.8px;line-height:11.8px;color:#333;font-weight:400;">41.9</div>
<div class="t" style="left:5.50px;top:143.11px;font-size:11.8px;line-height:11.8px;color:#fff;font-weight:400;">zone 5</div>
<div class="t" style="left:92.00px;top:143.11px;font-size:11.8px;line-height:11.8px;color:#333;font-weight:400;">25.7</div>
<div class="t" style="left:198.50px;top:143.11px;font-size:11.8px;line-height:11.8px;color:#333;font-weight:400;">28.15</div>
<div class="t" style="left:338.00px;top:143.11px;font-size:11.8px;line-height:11.8px;color:#333;font-weight:400;">30.7</div>
<div class="t" style="left:458.00px;top:143.11px;font-size:11.8px;line-height:11.8px;color:#333;font-weight:400;">47.65</div>
<div class="t" style="left:565.00px;top:143.11px;font-size:11.8px;line-height:11.8px;color:#333;font-weight:400;">31.95</div>
<div class="t" style="left:672.00px;top:143.11px;font-size:11.8px;line-height:11.8px;color:#333;font-weight:400;">35.3</div>
<div class="t" style="left:805.00px;top:143.11px;font-size:11.8px;line-height:11.8px;color:#333;font-weight:400;">37.1</div>
<div class="t" style="left:919.00px;top:143.11px;font-size:11.8px;line-height:11.8px;color:#333;font-weight:400;">54.1</div>
<div class="t" style="left:1026.00px;top:143.11px;font-size:11.8px;line-height:11.8px;color:#333;font-weight:400;">47.45</div>
<div class="t" style="left:5.50px;top:165.83px;font-size:11.8px;line-height:11.8px;color:#fff;font-weight:400;">zone 6</div>
<div class="t" style="left:92.00px;top:165.83px;font-size:11.8px;line-height:11.8px;color:#333;font-weight:400;">14.91</div>
<div class="t" style="left:198.50px;top:165.83px;font-size:11.8px;line-height:11.8px;color:#333;font-weight:400;">16.46</div>
<div class="t" style="left:338.00px;top:165.83px;font-size:11.8px;line-height:11.8px;color:#333;font-weight:400;">19.36</div>
<div class="t" style="left:458.00px;top:165.83px;font-size:11.8px;line-height:11.8px;color:#333;font-weight:400;">29.41</div>
<div class="t" style="left:565.00px;top:165.83px;font-size:11.8px;line-height:11.8px;color:#333;font-weight:400;">17.96</div>
<div class="t" style="left:672.00px;top:165.83px;font-size:11.8px;line-height:11.8px;color:#333;font-weight:400;">20.26</div>
<div class="t" style="left:805.00px;top:165.83px;font-size:11.8px;line-height:11.8px;color:#333;font-weight:400;">25.06</div>
<div class="t" style="left:919.00px;top:165.83px;font-size:11.8px;line-height:11.8px;color:#333;font-weight:400;">32.96</div>
<div class="t" style="left:1026.00px;top:165.83px;font-size:11.8px;line-height:11.8px;color:#333;font-weight:400;">21.01</div>
<div class="t" style="left:5.50px;top:188.55px;font-size:11.8px;line-height:11.8px;color:#fff;font-weight:400;">zone 7</div>
<div class="t" style="left:92.00px;top:188.55px;font-size:11.8px;line-height:11.8px;color:#333;font-weight:400;">18.18</div>
<div class="t" style="left:198.50px;top:188.55px;font-size:11.8px;line-height:11.8px;color:#333;font-weight:400;">20.48</div>
<div class="t" style="left:338.00px;top:188.55px;font-size:11.8px;line-height:11.8px;color:#333;font-weight:400;">22.78</div>
<div class="t" style="left:458.00px;top:188.55px;font-size:11.8px;line-height:11.8px;color:#333;font-weight:400;">38.13</div>
<div class="t" style="left:565.00px;top:188.55px;font-size:11.8px;line-height:11.8px;color:#333;font-weight:400;">23.93</div>
<div class="t" style="left:672.00px;top:188.55px;font-size:11.8px;line-height:11.8px;color:#333;font-weight:400;">27.08</div>
<div class="t" style="left:805.00px;top:188.55px;font-size:11.8px;line-height:11.8px;color:#333;font-weight:400;">28.58</div>
<div class="t" style="left:919.00px;top:188.55px;font-size:11.8px;line-height:11.8px;color:#333;font-weight:400;">44.33</div>
<div class="t" style="left:1026.00px;top:188.55px;font-size:11.8px;line-height:11.8px;color:#333;font-weight:400;">37.58</div>
<div class="t" style="left:5.50px;top:211.27px;font-size:11.8px;line-height:11.8px;color:#fff;font-weight:400;">zone 8</div>
<div class="t" style="left:92.00px;top:211.27px;font-size:11.8px;line-height:11.8px;color:#333;font-weight:400;">44.63</div>
<div class="t" style="left:198.50px;top:211.27px;font-size:11.8px;line-height:11.8px;color:#333;font-weight:400;">49.28</div>
<div class="t" style="left:338.00px;top:211.27px;font-size:11.8px;line-height:11.8px;color:#333;font-weight:400;">55.33</div>
<div class="t" style="left:458.00px;top:211.27px;font-size:11.8px;line-height:11.8px;color:#333;font-weight:400;">93.88</div>
<div class="t" style="left:565.00px;top:211.27px;font-size:11.8px;line-height:11.8px;color:#333;font-weight:400;">57.68</div>
<div class="t" style="left:672.00px;top:211.27px;font-size:11.8px;line-height:11.8px;color:#333;font-weight:400;">63.73</div>
<div class="t" style="left:805.00px;top:211.27px;font-size:11.8px;line-height:11.8px;color:#333;font-weight:400;">69.58</div>
<div class="t" style="left:919.00px;top:211.27px;font-size:11.8px;line-height:11.8px;color:#333;font-weight:400;">103.58</div>
<div class="t" style="left:1026.00px;top:211.27px;font-size:11.8px;line-height:11.8px;color:#333;font-weight:400;">98.28</div>
<div class="t" style="left:5.50px;top:233.99px;font-size:11.8px;line-height:11.8px;color:#fff;font-weight:400;">zone 9</div>
<div class="t" style="left:92.00px;top:233.99px;font-size:11.8px;line-height:11.8px;color:#333;font-weight:400;">30.98</div>
<div class="t" style="left:198.50px;top:233.99px;font-size:11.8px;line-height:11.8px;color:#333;font-weight:400;">33.43</div>
<div class="t" style="left:338.00px;top:233.99px;font-size:11.8px;line-height:11.8px;color:#333;font-weight:400;">35.98</div>
<div class="t" style="left:458.00px;top:233.99px;font-size:11.8px;line-height:11.8px;color:#333;font-weight:400;">52.93</div>
<div class="t" style="left:565.00px;top:233.99px;font-size:11.8px;line-height:11.8px;color:#333;font-weight:400;">37.23</div>
<div class="t" style="left:672.00px;top:233.99px;font-size:11.8px;line-height:11.8px;color:#333;font-weight:400;">40.58</div>
<div class="t" style="left:805.00px;top:233.99px;font-size:11.8px;line-height:11.8px;color:#333;font-weight:400;">42.38</div>
<div class="t" style="left:919.00px;top:233.99px;font-size:11.8px;line-height:11.8px;color:#333;font-weight:400;">59.38</div>
<div class="t" style="left:1026.00px;top:233.99px;font-size:11.8px;line-height:11.8px;color:#333;font-weight:400;">52.73</div>
<div class="t" style="left:5.50px;top:256.71px;font-size:11.8px;line-height:11.8px;color:#fff;font-weight:400;">zone 10</div>
<div class="t" style="left:92.00px;top:256.71px;font-size:11.8px;line-height:11.8px;color:#333;font-weight:400;">27.7</div>
<div class="t" style="left:198.50px;top:256.71px;font-size:11.8px;line-height:11.8px;color:#333;font-weight:400;">30.4</div>
<div class="t" style="left:338.00px;top:256.71px;font-size:11.8px;line-height:11.8px;color:#333;font-weight:400;">33.35</div>
<div class="t" style="left:458.00px;top:256.71px;font-size:11.8px;line-height:11.8px;color:#333;font-weight:400;">52.7</div>
<div class="t" style="left:565.00px;top:256.71px;font-size:11.8px;line-height:11.8px;color:#333;font-weight:400;">34.7</div>
<div class="t" style="left:672.00px;top:256.71px;font-size:11.8px;line-height:11.8px;color:#333;font-weight:400;">38.35</div>
<div class="t" style="left:805.00px;top:256.71px;font-size:11.8px;line-height:11.8px;color:#333;font-weight:400;">40.6</div>
<div class="t" style="left:919.00px;top:256.71px;font-size:11.8px;line-height:11.8px;color:#333;font-weight:400;">59.5</div>
<div class="t" style="left:1026.00px;top:256.71px;font-size:11.8px;line-height:11.8px;color:#333;font-weight:400;">53</div>
<div class="t" style="left:5.50px;top:279.43px;font-size:11.8px;line-height:11.8px;color:#fff;font-weight:400;">zone 11</div>
<div class="t" style="left:92.00px;top:279.43px;font-size:11.8px;line-height:11.8px;color:#333;font-weight:400;">20.45</div>
<div class="t" style="left:198.50px;top:279.43px;font-size:11.8px;line-height:11.8px;color:#333;font-weight:400;">22.3</div>
<div class="t" style="left:338.00px;top:279.43px;font-size:11.8px;line-height:11.8px;color:#333;font-weight:400;">24</div>
<div class="t" style="left:458.00px;top:279.43px;font-size:11.8px;line-height:11.8px;color:#333;font-weight:400;">35.5</div>
<div class="t" style="left:565.00px;top:279.43px;font-size:11.8px;line-height:11.8px;color:#333;font-weight:400;">24.85</div>
<div class="t" style="left:672.00px;top:279.43px;font-size:11.8px;line-height:11.8px;color:#333;font-weight:400;">27.4</div>
<div class="t" style="left:805.00px;top:279.43px;font-size:11.8px;line-height:11.8px;color:#333;font-weight:400;">28.25</div>
<div class="t" style="left:919.00px;top:279.43px;font-size:11.8px;line-height:11.8px;color:#333;font-weight:400;">40.8</div>
<div class="t" style="left:1026.00px;top:279.43px;font-size:11.8px;line-height:11.8px;color:#333;font-weight:400;">34.1</div>
<div class="t" style="left:5.50px;top:302.15px;font-size:11.8px;line-height:11.8px;color:#fff;font-weight:400;">zone 12</div>
<div class="t" style="left:92.00px;top:302.15px;font-size:11.8px;line-height:11.8px;color:#333;font-weight:400;">21.65</div>
<div class="t" style="left:198.50px;top:302.15px;font-size:11.8px;line-height:11.8px;color:#333;font-weight:400;">23.65</div>
<div class="t" style="left:338.00px;top:302.15px;font-size:11.8px;line-height:11.8px;color:#333;font-weight:400;">25.45</div>
<div class="t" style="left:458.00px;top:302.15px;font-size:11.8px;line-height:11.8px;color:#333;font-weight:400;">37.55</div>
<div class="t" style="left:565.00px;top:302.15px;font-size:11.8px;line-height:11.8px;color:#333;font-weight:400;">26.45</div>
<div class="t" style="left:672.00px;top:302.15px;font-size:11.8px;line-height:11.8px;color:#333;font-weight:400;">29.2</div>
<div class="t" style="left:805.00px;top:302.15px;font-size:11.8px;line-height:11.8px;color:#333;font-weight:400;">30.1</div>
<div class="t" style="left:919.00px;top:302.15px;font-size:11.8px;line-height:11.8px;color:#333;font-weight:400;">43.3</div>
<div class="t" style="left:1026.00px;top:302.15px;font-size:11.8px;line-height:11.8px;color:#333;font-weight:400;">36.35</div>
<div class="t" style="left:5.50px;top:324.87px;font-size:11.8px;line-height:11.8px;color:#fff;font-weight:400;">zone 13</div>
<div class="t" style="left:92.00px;top:324.87px;font-size:11.8px;line-height:11.8px;color:#333;font-weight:400;">30.47</div>
<div class="t" style="left:198.50px;top:324.87px;font-size:11.8px;line-height:11.8px;color:#333;font-weight:400;">34.12</div>
<div class="t" style="left:338.00px;top:324.87px;font-size:11.8px;line-height:11.8px;color:#333;font-weight:400;">38.62</div>
<div class="t" style="left:458.00px;top:324.87px;font-size:11.8px;line-height:11.8px;color:#333;font-weight:400;">67.57</div>
<div class="t" style="left:565.00px;top:324.87px;font-size:11.8px;line-height:11.8px;color:#333;font-weight:400;">40.47</div>
<div class="t" style="left:672.00px;top:324.87px;font-size:11.8px;line-height:11.8px;color:#333;font-weight:400;">45.32</div>
<div class="t" style="left:805.00px;top:324.87px;font-size:11.8px;line-height:11.8px;color:#333;font-weight:400;">49.37</div>
<div class="t" style="left:919.00px;top:324.87px;font-size:11.8px;line-height:11.8px;color:#333;font-weight:400;">75.82</div>
<div class="t" style="left:1026.00px;top:324.87px;font-size:11.8px;line-height:11.8px;color:#333;font-weight:400;">69.92</div>
<div class="t" style="left:5.50px;top:347.59px;font-size:11.8px;line-height:11.8px;color:#fff;font-weight:400;">zone 14</div>
<div class="t" style="left:92.00px;top:347.59px;font-size:11.8px;line-height:11.8px;color:#333;font-weight:400;">38.33</div>
<div class="t" style="left:198.50px;top:347.59px;font-size:11.8px;line-height:11.8px;color:#333;font-weight:400;">41.68</div>
<div class="t" style="left:338.00px;top:347.59px;font-size:11.8px;line-height:11.8px;color:#333;font-weight:400;">45.68</div>
<div class="t" style="left:458.00px;top:347.59px;font-size:11.8px;line-height:11.8px;color:#333;font-weight:400;">71.38</div>
<div class="t" style="left:565.00px;top:347.59px;font-size:11.8px;line-height:11.8px;color:#333;font-weight:400;">47.38</div>
<div class="t" style="left:672.00px;top:347.59px;font-size:11.8px;line-height:11.8px;color:#333;font-weight:400;">51.83</div>
<div class="t" style="left:805.00px;top:347.59px;font-size:11.8px;line-height:11.8px;color:#333;font-weight:400;">55.23</div>
<div class="t" style="left:919.00px;top:347.59px;font-size:11.8px;line-height:11.8px;color:#333;font-weight:400;">79.18</div>
<div class="t" style="left:1026.00px;top:347.59px;font-size:11.8px;line-height:11.8px;color:#333;font-weight:400;">73.08</div>
<div class="t" style="left:5.50px;top:370.31px;font-size:11.8px;line-height:11.8px;color:#fff;font-weight:400;">zone 15</div>
<div class="t" style="left:92.00px;top:370.31px;font-size:11.8px;line-height:11.8px;color:#333;font-weight:400;">35.28</div>
<div class="t" style="left:198.50px;top:370.31px;font-size:11.8px;line-height:11.8px;color:#333;font-weight:400;">38.78</div>
<div class="t" style="left:338.00px;top:370.31px;font-size:11.8px;line-height:11.8px;color:#333;font-weight:400;">43.03</div>
<div class="t" style="left:458.00px;top:370.31px;font-size:11.8px;line-height:11.8px;color:#333;font-weight:400;">70.38</div>
<div class="t" style="left:565.00px;top:370.31px;font-size:11.8px;line-height:11.8px;color:#333;font-weight:400;">44.78</div>
<div class="t" style="left:672.00px;top:370.31px;font-size:11.8px;line-height:11.8px;color:#333;font-weight:400;">49.43</div>
<div class="t" style="left:805.00px;top:370.31px;font-size:11.8px;line-height:11.8px;color:#333;font-weight:400;">53.18</div>
<div class="t" style="left:919.00px;top:370.31px;font-size:11.8px;line-height:11.8px;color:#333;font-weight:400;">78.38</div>
<div class="t" style="left:1026.00px;top:370.31px;font-size:11.8px;line-height:11.8px;color:#333;font-weight:400;">72.38</div>
<div class="t" style="left:5.50px;top:393.03px;font-size:11.8px;line-height:11.8px;color:#fff;font-weight:400;">zone 16</div>
<div class="t" style="left:92.00px;top:393.03px;font-size:11.8px;line-height:11.8px;color:#333;font-weight:400;">36.16</div>
<div class="t" style="left:198.50px;top:393.03px;font-size:11.8px;line-height:11.8px;color:#333;font-weight:400;">39.66</div>
<div class="t" style="left:338.00px;top:393.03px;font-size:11.8px;line-height:11.8px;color:#333;font-weight:400;">43.91</div>
<div class="t" style="left:458.00px;top:393.03px;font-size:11.8px;line-height:11.8px;color:#333;font-weight:400;">71.26</div>
<div class="t" style="left:565.00px;top:393.03px;font-size:11.8px;line-height:11.8px;color:#333;font-weight:400;">45.66</div>
<div class="t" style="left:672.00px;top:393.03px;font-size:11.8px;line-height:11.8px;color:#333;font-weight:400;">50.31</div>
<div class="t" style="left:805.00px;top:393.03px;font-size:11.8px;line-height:11.8px;color:#333;font-weight:400;">54.06</div>
<div class="t" style="left:919.00px;top:393.03px;font-size:11.8px;line-height:11.8px;color:#333;font-weight:400;">79.26</div>
<div class="t" style="left:1026.00px;top:393.03px;font-size:11.8px;line-height:11.8px;color:#333;font-weight:400;">73.26</div>
<div class="t" style="left:5.50px;top:415.75px;font-size:11.8px;line-height:11.8px;color:#fff;font-weight:400;">zone 17</div>
<div class="t" style="left:92.00px;top:415.75px;font-size:11.8px;line-height:11.8px;color:#333;font-weight:400;">19.25</div>
<div class="t" style="left:198.50px;top:415.75px;font-size:11.8px;line-height:11.8px;color:#333;font-weight:400;">20.95</div>
<div class="t" style="left:338.00px;top:415.75px;font-size:11.8px;line-height:11.8px;color:#333;font-weight:400;">22.6</div>
<div class="t" style="left:458.00px;top:415.75px;font-size:11.8px;line-height:11.8px;color:#333;font-weight:400;">33.4</div>
<div class="t" style="left:565.00px;top:415.75px;font-size:11.8px;line-height:11.8px;color:#333;font-weight:400;">23.25</div>
<div class="t" style="left:672.00px;top:415.75px;font-size:11.8px;line-height:11.8px;color:#333;font-weight:400;">25.6</div>
<div class="t" style="left:805.00px;top:415.75px;font-size:11.8px;line-height:11.8px;color:#333;font-weight:400;">26.4</div>
<div class="t" style="left:919.00px;top:415.75px;font-size:11.8px;line-height:11.8px;color:#333;font-weight:400;">38.35</div>
<div class="t" style="left:1026.00px;top:415.75px;font-size:11.8px;line-height:11.8px;color:#333;font-weight:400;">31.85</div>
<div class="t" style="left:5.50px;top:438.47px;font-size:11.8px;line-height:11.8px;color:#fff;font-weight:400;">zone 18</div>
<div class="t" style="left:92.00px;top:438.47px;font-size:11.8px;line-height:11.8px;color:#333;font-weight:400;">47.98</div>
<div class="t" style="left:198.50px;top:438.47px;font-size:11.8px;line-height:11.8px;color:#333;font-weight:400;">53.03</div>
<div class="t" style="left:338.00px;top:438.47px;font-size:11.8px;line-height:11.8px;color:#333;font-weight:400;">59.73</div>
<div class="t" style="left:458.00px;top:438.47px;font-size:11.8px;line-height:11.8px;color:#333;font-weight:400;">102.28</div>
<div class="t" style="left:565.00px;top:438.47px;font-size:11.8px;line-height:11.8px;color:#333;font-weight:400;">62.28</div>
<div class="t" style="left:672.00px;top:438.47px;font-size:11.8px;line-height:11.8px;color:#333;font-weight:400;">68.83</div>
<div class="t" style="left:805.00px;top:438.47px;font-size:11.8px;line-height:11.8px;color:#333;font-weight:400;">75.43</div>
<div class="t" style="left:919.00px;top:438.47px;font-size:11.8px;line-height:11.8px;color:#333;font-weight:400;">112.58</div>
<div class="t" style="left:1026.00px;top:438.47px;font-size:11.8px;line-height:11.8px;color:#333;font-weight:400;">107.53</div>
<div class="t" style="left:5.50px;top:461.19px;font-size:11.8px;line-height:11.8px;color:#fff;font-weight:400;">zone 19</div>
<div class="t" style="left:92.00px;top:461.19px;font-size:11.8px;line-height:11.8px;color:#333;font-weight:400;">83.51</div>
<div class="t" style="left:198.50px;top:461.19px;font-size:11.8px;line-height:11.8px;color:#333;font-weight:400;">89.11</div>
<div class="t" style="left:338.00px;top:461.19px;font-size:11.8px;line-height:11.8px;color:#333;font-weight:400;">96.76</div>
<div class="t" style="left:458.00px;top:461.19px;font-size:11.8px;line-height:11.8px;color:#333;font-weight:400;">144.86</div>
<div class="t" style="left:565.00px;top:461.19px;font-size:11.8px;line-height:11.8px;color:#333;font-weight:400;">99.56</div>
<div class="t" style="left:672.00px;top:461.19px;font-size:11.8px;line-height:11.8px;color:#333;font-weight:400;">106.81</div>
<div class="t" style="left:805.00px;top:461.19px;font-size:11.8px;line-height:11.8px;color:#333;font-weight:400;">114.46</div>
<div class="t" style="left:919.00px;top:461.19px;font-size:11.8px;line-height:11.8px;color:#333;font-weight:400;">156.01</div>
<div class="t" style="left:1026.00px;top:461.19px;font-size:11.8px;line-height:11.8px;color:#333;font-weight:400;">151.31</div>
<div class="t" style="left:5.50px;top:483.91px;font-size:11.8px;line-height:11.8px;color:#fff;font-weight:400;">zone 20</div>
<div class="t" style="left:92.00px;top:483.91px;font-size:11.8px;line-height:11.8px;color:#333;font-weight:400;">66.76</div>
<div class="t" style="left:198.50px;top:483.91px;font-size:11.8px;line-height:11.8px;color:#333;font-weight:400;">70.36</div>
<div class="t" style="left:338.00px;top:483.91px;font-size:11.8px;line-height:11.8px;color:#333;font-weight:400;">74.76</div>
<div class="t" style="left:458.00px;top:483.91px;font-size:11.8px;line-height:11.8px;color:#333;font-weight:400;">102.86</div>
<div class="t" style="left:565.00px;top:483.91px;font-size:11.8px;line-height:11.8px;color:#333;font-weight:400;">76.56</div>
<div class="t" style="left:672.00px;top:483.91px;font-size:11.8px;line-height:11.8px;color:#333;font-weight:400;">81.31</div>
<div class="t" style="left:805.00px;top:483.91px;font-size:11.8px;line-height:11.8px;color:#333;font-weight:400;">85.21</div>
<div class="t" style="left:919.00px;top:483.91px;font-size:11.8px;line-height:11.8px;color:#333;font-weight:400;">111.01</div>
<div class="t" style="left:1026.00px;top:483.91px;font-size:11.8px;line-height:11.8px;color:#333;font-weight:400;">105.06</div>
<div class="t" style="left:5.50px;top:506.63px;font-size:11.8px;line-height:11.8px;color:#fff;font-weight:400;">zone 21</div>
<div class="t" style="left:92.00px;top:506.63px;font-size:11.8px;line-height:11.8px;color:#333;font-weight:400;">21.72</div>
<div class="t" style="left:198.50px;top:506.63px;font-size:11.8px;line-height:11.8px;color:#333;font-weight:400;">24.37</div>
<div class="t" style="left:338.00px;top:506.63px;font-size:11.8px;line-height:11.8px;color:#333;font-weight:400;">27.17</div>
<div class="t" style="left:458.00px;top:506.63px;font-size:11.8px;line-height:11.8px;color:#333;font-weight:400;">45.72</div>
<div class="t" style="left:565.00px;top:506.63px;font-size:11.8px;line-height:11.8px;color:#333;font-weight:400;">28.52</div>
<div class="t" style="left:672.00px;top:506.63px;font-size:11.8px;line-height:11.8px;color:#333;font-weight:400;">32.07</div>
<div class="t" style="left:805.00px;top:506.63px;font-size:11.8px;line-height:11.8px;color:#333;font-weight:400;">34.17</div>
<div class="t" style="left:919.00px;top:506.63px;font-size:11.8px;line-height:11.8px;color:#333;font-weight:400;">52.42</div>
<div class="t" style="left:1026.00px;top:506.63px;font-size:11.8px;line-height:11.8px;color:#333;font-weight:400;">45.87</div>
<div class="t" style="left:5.50px;top:529.35px;font-size:11.8px;line-height:11.8px;color:#fff;font-weight:400;">zone 22</div>
<div class="t" style="left:92.00px;top:529.35px;font-size:11.8px;line-height:11.8px;color:#333;font-weight:400;">22.35</div>
<div class="t" style="left:198.50px;top:529.35px;font-size:11.8px;line-height:11.8px;color:#333;font-weight:400;">24.4</div>
<div class="t" style="left:338.00px;top:529.35px;font-size:11.8px;line-height:11.8px;color:#333;font-weight:400;">26.3</div>
<div class="t" style="left:458.00px;top:529.35px;font-size:11.8px;line-height:11.8px;color:#333;font-weight:400;">39.25</div>
<div class="t" style="left:565.00px;top:529.35px;font-size:11.8px;line-height:11.8px;color:#333;font-weight:400;">27.35</div>
<div class="t" style="left:672.00px;top:529.35px;font-size:11.8px;line-height:11.8px;color:#333;font-weight:400;">30.2</div>
<div class="t" style="left:805.00px;top:529.35px;font-size:11.8px;line-height:11.8px;color:#333;font-weight:400;">31.25</div>
<div class="t" style="left:919.00px;top:529.35px;font-size:11.8px;line-height:11.8px;color:#333;font-weight:400;">45.1</div>
<div class="t" style="left:1026.00px;top:529.35px;font-size:11.8px;line-height:11.8px;color:#333;font-weight:400;">38.2</div>
<div class="t" style="left:5.50px;top:552.07px;font-size:11.8px;line-height:11.8px;color:#fff;font-weight:400;">zone 23</div>
<div class="t" style="left:92.00px;top:552.07px;font-size:11.8px;line-height:11.8px;color:#333;font-weight:400;">20.42</div>
<div class="t" style="left:198.50px;top:552.07px;font-size:11.8px;line-height:11.8px;color:#333;font-weight:400;">22.87</div>
<div class="t" style="left:338.00px;top:552.07px;font-size:11.8px;line-height:11.8px;color:#333;font-weight:400;">25.42</div>
<div class="t" style="left:458.00px;top:552.07px;font-size:11.8px;line-height:11.8px;color:#333;font-weight:400;">42.37</div>
<div class="t" style="left:565.00px;top:552.07px;font-size:11.8px;line-height:11.8px;color:#333;font-weight:400;">26.67</div>
<div class="t" style="left:672.00px;top:552.07px;font-size:11.8px;line-height:11.8px;color:#333;font-weight:400;">30.02</div>
<div class="t" style="left:805.00px;top:552.07px;font-size:11.8px;line-height:11.8px;color:#333;font-weight:400;">31.82</div>
<div class="t" style="left:919.00px;top:552.07px;font-size:11.8px;line-height:11.8px;color:#333;font-weight:400;">48.82</div>
<div class="t" style="left:1026.00px;top:552.07px;font-size:11.8px;line-height:11.8px;color:#333;font-weight:400;">42.17</div>
<div class="t" style="left:5.50px;top:574.79px;font-size:11.8px;line-height:11.8px;color:#fff;font-weight:400;">zone 24</div>
<div class="t" style="left:92.00px;top:574.79px;font-size:11.8px;line-height:11.8px;color:#333;font-weight:400;">26.35</div>
<div class="t" style="left:198.50px;top:574.79px;font-size:11.8px;line-height:11.8px;color:#333;font-weight:400;">28.9</div>
<div class="t" style="left:338.00px;top:574.79px;font-size:11.8px;line-height:11.8px;color:#333;font-weight:400;">31.6</div>
<div class="t" style="left:458.00px;top:574.79px;font-size:11.8px;line-height:11.8px;color:#333;font-weight:400;">49.3</div>
<div class="t" style="left:565.00px;top:574.79px;font-size:11.8px;line-height:11.8px;color:#333;font-weight:400;">32.9</div>
<div class="t" style="left:672.00px;top:574.79px;font-size:11.8px;line-height:11.8px;color:#333;font-weight:400;">36.35</div>
<div class="t" style="left:805.00px;top:574.79px;font-size:11.8px;line-height:11.8px;color:#333;font-weight:400;">38.25</div>
<div class="t" style="left:919.00px;top:574.79px;font-size:11.8px;line-height:11.8px;color:#333;font-weight:400;">55.9</div>
<div class="t" style="left:1026.00px;top:574.79px;font-size:11.8px;line-height:11.8px;color:#333;font-weight:400;">49.3</div>
<div class="t" style="left:5.50px;top:597.51px;font-size:11.8px;line-height:11.8px;color:#fff;font-weight:400;">zone 25</div>
<div class="t" style="left:92.00px;top:597.51px;font-size:11.8px;line-height:11.8px;color:#333;font-weight:400;">14.49</div>
<div class="t" style="left:198.50px;top:597.51px;font-size:11.8px;line-height:11.8px;color:#333;font-weight:400;">15.84</div>
<div class="t" style="left:338.00px;top:597.51px;font-size:11.8px;line-height:11.8px;color:#333;font-weight:400;">17.29</div>
<div class="t" style="left:458.00px;top:597.51px;font-size:11.8px;line-height:11.8px;color:#333;font-weight:400;">26.44</div>
<div class="t" style="left:565.00px;top:597.51px;font-size:11.8px;line-height:11.8px;color:#333;font-weight:400;">17.49</div>
<div class="t" style="left:672.00px;top:597.51px;font-size:11.8px;line-height:11.8px;color:#333;font-weight:400;">19.34</div>
<div class="t" style="left:805.00px;top:597.51px;font-size:11.8px;line-height:11.8px;color:#333;font-weight:400;">21.54</div>
<div class="t" style="left:919.00px;top:597.51px;font-size:11.8px;line-height:11.8px;color:#333;font-weight:400;">30.39</div>
<div class="t" style="left:1026.00px;top:597.51px;font-size:11.8px;line-height:11.8px;color:#333;font-weight:400;">24.44</div>
<div class="t" style="left:5.50px;top:620.23px;font-size:11.8px;line-height:11.8px;color:#fff;font-weight:400;">zone 26</div>
<div class="t" style="left:92.00px;top:620.23px;font-size:11.8px;line-height:11.8px;color:#333;font-weight:400;">25.94</div>
<div class="t" style="left:198.50px;top:620.23px;font-size:11.8px;line-height:11.8px;color:#333;font-weight:400;">28.64</div>
<div class="t" style="left:338.00px;top:620.23px;font-size:11.8px;line-height:11.8px;color:#333;font-weight:400;">31.59</div>
<div class="t" style="left:458.00px;top:620.23px;font-size:11.8px;line-height:11.8px;color:#333;font-weight:400;">50.94</div>
<div class="t" style="left:565.00px;top:620.23px;font-size:11.8px;line-height:11.8px;color:#333;font-weight:400;">32.94</div>
<div class="t" style="left:672.00px;top:620.23px;font-size:11.8px;line-height:11.8px;color:#333;font-weight:400;">36.59</div>
<div class="t" style="left:805.00px;top:620.23px;font-size:11.8px;line-height:11.8px;color:#333;font-weight:400;">38.84</div>
<div class="t" style="left:919.00px;top:620.23px;font-size:11.8px;line-height:11.8px;color:#333;font-weight:400;">57.74</div>
<div class="t" style="left:1026.00px;top:620.23px;font-size:11.8px;line-height:11.8px;color:#333;font-weight:400;">51.24</div>
<div class="t" style="left:5.50px;top:642.95px;font-size:11.8px;line-height:11.8px;color:#fff;font-weight:400;">zone 27</div>
<div class="t" style="left:92.00px;top:642.95px;font-size:11.8px;line-height:11.8px;color:#333;font-weight:400;">46.16</div>
<div class="t" style="left:198.50px;top:642.95px;font-size:11.8px;line-height:11.8px;color:#333;font-weight:400;">47.31</div>
<div class="t" style="left:338.00px;top:642.95px;font-size:11.8px;line-height:11.8px;color:#333;font-weight:400;">49.31</div>
<div class="t" style="left:458.00px;top:642.95px;font-size:11.8px;line-height:11.8px;color:#333;font-weight:400;">59.36</div>
<div class="t" style="left:565.00px;top:642.95px;font-size:11.8px;line-height:11.8px;color:#333;font-weight:400;">48.56</div>
<div class="t" style="left:672.00px;top:642.95px;font-size:11.8px;line-height:11.8px;color:#333;font-weight:400;">50.21</div>
<div class="t" style="left:805.00px;top:642.95px;font-size:11.8px;line-height:11.8px;color:#333;font-weight:400;">55.01</div>
<div class="t" style="left:919.00px;top:642.95px;font-size:11.8px;line-height:11.8px;color:#333;font-weight:400;">62.91</div>
<div class="t" style="left:1026.00px;top:642.95px;font-size:11.8px;line-height:11.8px;color:#333;font-weight:400;">54.51</div>
<div class="t" style="left:5.50px;top:665.67px;font-size:11.8px;line-height:11.8px;color:#fff;font-weight:400;">zone 28</div>
<div class="t" style="left:92.00px;top:665.67px;font-size:11.8px;line-height:11.8px;color:#333;font-weight:400;">30.81</div>
<div class="t" style="left:198.50px;top:665.67px;font-size:11.8px;line-height:11.8px;color:#333;font-weight:400;">33.66</div>
<div class="t" style="left:338.00px;top:665.67px;font-size:11.8px;line-height:11.8px;color:#333;font-weight:400;">36.86</div>
<div class="t" style="left:458.00px;top:665.67px;font-size:11.8px;line-height:11.8px;color:#333;font-weight:400;">57.81</div>
<div class="t" style="left:565.00px;top:665.67px;font-size:11.8px;line-height:11.8px;color:#333;font-weight:400;">38.31</div>
<div class="t" style="left:672.00px;top:665.67px;font-size:11.8px;line-height:11.8px;color:#333;font-weight:400;">42.16</div>
<div class="t" style="left:805.00px;top:665.67px;font-size:11.8px;line-height:11.8px;color:#333;font-weight:400;">44.71</div>
<div class="t" style="left:919.00px;top:665.67px;font-size:11.8px;line-height:11.8px;color:#333;font-weight:400;">64.86</div>
<div class="t" style="left:1026.00px;top:665.67px;font-size:11.8px;line-height:11.8px;color:#333;font-weight:400;">58.46</div>
<div class="t" style="left:5.50px;top:688.39px;font-size:11.8px;line-height:11.8px;color:#fff;font-weight:400;">zone 29</div>
<div class="t" style="left:92.00px;top:688.39px;font-size:11.8px;line-height:11.8px;color:#333;font-weight:400;">23</div>
<div class="t" style="left:198.50px;top:688.39px;font-size:11.8px;line-height:11.8px;color:#333;font-weight:400;">25.15</div>
<div class="t" style="left:338.00px;top:688.39px;font-size:11.8px;line-height:11.8px;color:#333;font-weight:400;">27.2</div>
<div class="t" style="left:458.00px;top:688.39px;font-size:11.8px;line-height:11.8px;color:#333;font-weight:400;">40.9</div>
<div class="t" style="left:565.00px;top:688.39px;font-size:11.8px;line-height:11.8px;color:#333;font-weight:400;">28.3</div>
<div class="t" style="left:672.00px;top:688.39px;font-size:11.8px;line-height:11.8px;color:#333;font-weight:400;">31.25</div>
<div class="t" style="left:805.00px;top:688.39px;font-size:11.8px;line-height:11.8px;color:#333;font-weight:400;">32.4</div>
<div class="t" style="left:919.00px;top:688.39px;font-size:11.8px;line-height:11.8px;color:#333;font-weight:400;">46.9</div>
<div class="t" style="left:1026.00px;top:688.39px;font-size:11.8px;line-height:11.8px;color:#333;font-weight:400;">40.05</div>
<div class="t" style="left:5.50px;top:711.11px;font-size:11.8px;line-height:11.8px;color:#fff;font-weight:400;">zone 30</div>
<div class="t" style="left:92.00px;top:711.11px;font-size:11.8px;line-height:11.8px;color:#333;font-weight:400;">49.73</div>
<div class="t" style="left:198.50px;top:711.11px;font-size:11.8px;line-height:11.8px;color:#333;font-weight:400;">54.43</div>
<div class="t" style="left:338.00px;top:711.11px;font-size:11.8px;line-height:11.8px;color:#333;font-weight:400;">60.63</div>
<div class="t" style="left:458.00px;top:711.11px;font-size:11.8px;line-height:11.8px;color:#333;font-weight:400;">99.98</div>
<div class="t" style="left:565.00px;top:711.11px;font-size:11.8px;line-height:11.8px;color:#333;font-weight:400;">62.98</div>
<div class="t" style="left:672.00px;top:711.11px;font-size:11.8px;line-height:11.8px;color:#333;font-weight:400;">69.13</div>
<div class="t" style="left:805.00px;top:711.11px;font-size:11.8px;line-height:11.8px;color:#333;font-weight:400;">75.13</div>
<div class="t" style="left:919.00px;top:711.11px;font-size:11.8px;line-height:11.8px;color:#333;font-weight:400;">109.78</div>
<div class="t" style="left:1026.00px;top:711.11px;font-size:11.8px;line-height:11.8px;color:#333;font-weight:400;">104.53</div>
<div class="t" style="left:5.50px;top:733.83px;font-size:11.8px;line-height:11.8px;color:#fff;font-weight:400;">zone 31</div>
<div class="t" style="left:92.00px;top:733.83px;font-size:11.8px;line-height:11.8px;color:#333;font-weight:400;">41.03</div>
<div class="t" style="left:198.50px;top:733.83px;font-size:11.8px;line-height:11.8px;color:#333;font-weight:400;">44.68</div>
<div class="t" style="left:338.00px;top:733.83px;font-size:11.8px;line-height:11.8px;color:#333;font-weight:400;">49.18</div>
<div class="t" style="left:458.00px;top:733.83px;font-size:11.8px;line-height:11.8px;color:#333;font-weight:400;">78.13</div>
<div class="t" style="left:565.00px;top:733.83px;font-size:11.8px;line-height:11.8px;color:#333;font-weight:400;">51.03</div>
<div class="t" style="left:672.00px;top:733.83px;font-size:11.8px;line-height:11.8px;color:#333;font-weight:400;">55.88</div>
<div class="t" style="left:805.00px;top:733.83px;font-size:11.8px;line-height:11.8px;color:#333;font-weight:400;">59.93</div>
<div class="t" style="left:919.00px;top:733.83px;font-size:11.8px;line-height:11.8px;color:#333;font-weight:400;">86.38</div>
<div class="t" style="left:1026.00px;top:733.83px;font-size:11.8px;line-height:11.8px;color:#333;font-weight:400;">80.48</div>
<div class="t" style="left:5.50px;top:756.55px;font-size:11.8px;line-height:11.8px;color:#fff;font-weight:400;">zone 32</div>
<div class="t" style="left:92.00px;top:756.55px;font-size:11.8px;line-height:11.8px;color:#333;font-weight:400;">20.42</div>
<div class="t" style="left:198.50px;top:756.55px;font-size:11.8px;line-height:11.8px;color:#333;font-weight:400;">22.87</div>
<div class="t" style="left:338.00px;top:756.55px;font-size:11.8px;line-height:11.8px;color:#333;font-weight:400;">25.42</div>
<div class="t" style="left:458.00px;top:756.55px;font-size:11.8px;line-height:11.8px;color:#333;font-weight:400;">42.37</div>
<div class="t" style="left:565.00px;top:756.55px;font-size:11.8px;line-height:11.8px;color:#333;font-weight:400;">26.67</div>
<div class="t" style="left:672.00px;top:756.55px;font-size:11.8px;line-height:11.8px;color:#333;font-weight:400;">30.02</div>
<div class="t" style="left:805.00px;top:756.55px;font-size:11.8px;line-height:11.8px;color:#333;font-weight:400;">31.82</div>
<div class="t" style="left:919.00px;top:756.55px;font-size:11.8px;line-height:11.8px;color:#333;font-weight:400;">48.82</div>
<div class="t" style="left:1026.00px;top:756.55px;font-size:11.8px;line-height:11.8px;color:#333;font-weight:400;">42.17</div>
</div><div style="position:absolute;left:420px;top:963px;width:1131px;height:6px;background:#efefef"></div><div style="position:absolute;left:420px;top:963px;width:882px;height:6px;background:#8c8c8c"></div><div style="position:absolute;left:1551px;top:203px;width:6px;height:766px;background:#efefef"></div><div style="position:absolute;left:1551px;top:204px;width:6px;height:75px;background:#8c8c8c"></div></div></body></html>
